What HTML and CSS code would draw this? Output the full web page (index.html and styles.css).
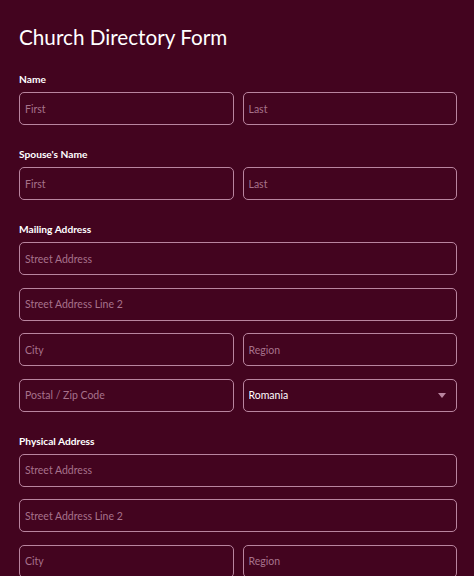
FILE: index.html
```html
<!DOCTYPE html>
<html lang="en">
<head>
<meta charset="utf-8">
<title>Church Directory Form</title>
<link rel="stylesheet" href="styles.css">
</head>
<body>
<form class="form">
  <h1 class="title">Church Directory Form</h1>

  <div class="group">
    <label class="label">Name</label>
    <div class="row">
      <input class="field" placeholder="First">
      <input class="field" placeholder="Last">
    </div>
  </div>

  <div class="group">
    <label class="label">Spouse's Name</label>
    <div class="row">
      <input class="field" placeholder="First">
      <input class="field" placeholder="Last">
    </div>
  </div>

  <div class="group">
    <label class="label">Mailing Address</label>
    <input class="field" placeholder="Street Address">
    <input class="field" placeholder="Street Address Line 2">
    <div class="row">
      <input class="field" placeholder="City">
      <input class="field" placeholder="Region">
    </div>
    <div class="row">
      <input class="field" placeholder="Postal / Zip Code">
      <div class="select-wrap">
        <select class="field select"><option>Romania</option></select>
        <svg class="arrow" width="8" height="5" viewBox="0 0 8 5"><path d="M0 0h8L4 5z" fill="#b9859f"/></svg>
      </div>
    </div>
  </div>

  <div class="group">
    <label class="label">Physical Address</label>
    <input class="field" placeholder="Street Address">
    <input class="field" placeholder="Street Address Line 2">
    <div class="row">
      <input class="field" placeholder="City">
      <input class="field" placeholder="Region">
    </div>
  </div>
</form>
</body>
</html>
```

FILE: styles.css
```css
html, body {
  margin: 0;
  padding: 0;
  background: #43041f;
  height: 100%;
  overflow: hidden;
}
body {
  font-family: Lato, "Open Sans", sans-serif;
  color: #ffffff;
}
.form {
  padding: 22px 17px 0 19px;
  display: flex;
  flex-direction: column;
  gap: 21px;
}
.title {
  margin: 0 0 -2px 0;
  font-size: 20.7px;
  font-weight: 400;
  line-height: 30px;
}
.group {
  display: flex;
  flex-direction: column;
  gap: 12.5px;
}
.label {
  font-size: 10.2px;
  font-weight: 700;
  line-height: 16px;
  margin-bottom: -7.5px;
}
.row {
  display: grid;
  grid-template-columns: 1fr 1fr;
  gap: 9px;
}
.field {
  box-sizing: border-box;
  height: 33px;
  width: 100%;
  margin: 0;
  padding: 0 5px;
  background: transparent;
  border: 1px solid #b9859f;
  border-radius: 5px;
  color: #ffffff;
  font-family: Lato, "Open Sans", sans-serif;
  font-size: 10.5px;
  outline: none;
}
.field::placeholder {
  color: #a7728c;
}
.select-wrap {
  position: relative;
}
.select {
  -webkit-appearance: none;
  appearance: none;
  padding: 0 5px;
  color: #ffffff;
}
.arrow {
  position: absolute;
  right: 11px;
  top: 14px;
}
```
